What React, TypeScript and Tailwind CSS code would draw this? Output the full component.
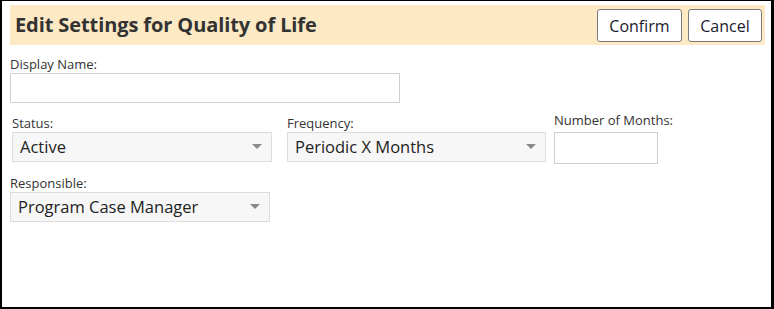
import { ChangeEvent, useState } from 'react';

// Ventana de edición de una métrica — cabecera con acciones y formulario simple.

const font = { fontFamily: '"Open Sans", "Noto Sans", sans-serif' };

function Caret() {
  return (
    <svg width="10" height="6" viewBox="0 0 10 6" className="shrink-0">
      <path d="M0 0 H10 L5 5 Z" fill="#8a8a8a" />
    </svg>
  );
}

function FakeSelect({ value, className }: { value: string; className: string }) {
  return (
    <div
      className={`flex items-center justify-between h-[30px] pl-[7px] pr-[9px] border border-[#dcdcdc] bg-[#f7f7f7] text-[16.5px] text-[#222] ${className}`}
    >
      <span className="leading-none">{value}</span>
      <Caret />
    </div>
  );
}

export default function App() {
  const [displayName, setDisplayName] = useState('');
  const [months, setMonths] = useState('');

  return (
    <div
      className="w-[774px] h-[309px] bg-white border-black border-l-2 border-t border-r-[3px] border-b-2 pl-2 pr-[6px] pt-1"
      style={font}
    >
      {/* Header */}
      <div className="flex items-center justify-between h-10 bg-[#fde9c3] pl-[5px] pr-[3px]">
        <h1 className="text-[20px] font-bold text-[#333] tracking-[-0.1px]">
          Edit Settings for Quality of Life
        </h1>
        <div className="flex gap-[6px] pt-[1px]">
          <button className="h-[33px] w-[85px] rounded-[3px] border border-[#7a7a7a] bg-white text-[16px] text-[#1a1a2e]">
            Confirm
          </button>
          <button className="h-[33px] w-[74px] rounded-[3px] border border-[#7a7a7a] bg-white text-[16px] text-[#1a1a2e]">
            Cancel
          </button>
        </div>
      </div>

      {/* Form */}
      <div className="flex flex-col text-[#333]">
        <label className="text-[13px] mt-[10px] leading-[18px]">Display Name:</label>
        <input
          value={displayName}
          onChange={(e: ChangeEvent<HTMLInputElement>) => setDisplayName(e.target.value)}
          className="w-[390px] h-[30px] border border-[#d0d0d0] outline-none px-1"
        />

        <div className="flex mt-[8px]">
          <div className="flex flex-col ml-[2px] pt-[3px]">
            <label className="text-[13px] leading-[18px]">Status:</label>
            <FakeSelect value="Active" className="w-[260px]" />
          </div>
          <div className="flex flex-col ml-[15px] pt-[3px]">
            <label className="text-[13px] leading-[18px]">Frequency:</label>
            <FakeSelect value="Periodic X Months" className="w-[259px]" />
          </div>
          <div className="flex flex-col ml-[8px]">
            <label className="text-[13px] leading-[18px]">Number of Months:</label>
            <input
              value={months}
              onChange={(e: ChangeEvent<HTMLInputElement>) => setMonths(e.target.value)}
              className="w-[104px] h-[32px] mt-[3px] border border-[#d0d0d0] outline-none px-1"
            />
          </div>
        </div>

        <label className="text-[13px] mt-[10px] leading-[18px]">Responsible:</label>
        <FakeSelect value="Program Case Manager" className="w-[260px]" />
      </div>
    </div>
  );
}
